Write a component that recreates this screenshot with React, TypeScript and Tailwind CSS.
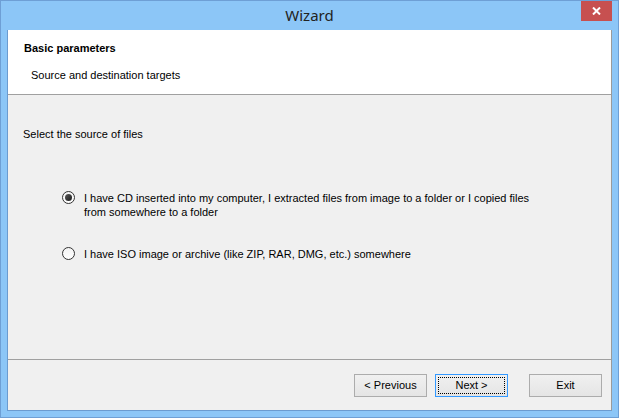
import React from "react";

function Radio({ checked }: { checked?: boolean }) {
  return (
    <span className="relative flex h-[13px] w-[13px] shrink-0 items-center justify-center rounded-full border border-[#333333] bg-gradient-to-b from-[#f4f4f4] to-[#ffffff]">
      {checked && (
        <span className="h-[7px] w-[7px] rounded-full bg-gradient-to-br from-[#5a5a5a] to-[#1c1c1c]" />
      )}
    </span>
  );
}

function Btn({ label, focused }: { label: string; focused?: boolean }) {
  return (
    <button
      className={
        "flex h-[23px] w-[73px] items-center justify-center border bg-gradient-to-b from-[#f0f0f0] to-[#e5e5e5] p-[2px] text-[11px] text-black " +
        (focused ? "border-[#3399ff]" : "border-[#acacac]")
      }
    >
      <span
        className={
          "flex h-full w-full items-center justify-center " +
          (focused ? "border border-dotted border-black" : "")
        }
      >
        {label}
      </span>
    </button>
  );
}

export default function App() {
  return (
    <div
      className="flex h-[418px] w-[619px] flex-col border border-[#6e9fd5] bg-[#8cc6f7]"
      style={{ fontFamily: "Tahoma, 'Liberation Sans', Arial, sans-serif" }}
    >
      {/* title bar */}
      <div className="relative flex h-[29px] shrink-0 items-center justify-center">
        <span
          className="text-[15px] text-[#222]"
          style={{ fontFamily: "'Segoe UI', 'Noto Sans', sans-serif" }}
        >
          Wizard
        </span>
        <div className="absolute right-[6px] top-0 flex h-[20px] w-[31px] items-center justify-center bg-[#c75050]">
          <svg width="9" height="8" viewBox="0 0 9 8">
            <path d="M1 0.5 L8 7.5 M8 0.5 L1 7.5" stroke="#fff" strokeWidth="2" />
          </svg>
        </div>
      </div>

      {/* client */}
      <div className="mx-[6px] mb-[6px] flex flex-1 flex-col border-l border-r border-b border-l-[#6b9bd0] border-r-[#9a9a9a] border-b-[#6b9bd0] bg-[#f0f0f0] text-[11px] text-black">
        <div className="flex h-[65px] shrink-0 flex-col border-b border-[#a0a0a0] bg-white pl-[16px] pt-[10px]">
          <div className="font-bold">Basic parameters</div>
          <div className="mt-[10px] pl-[7px]">Source and destination targets</div>
        </div>

        <div className="flex flex-1 flex-col px-[15px]">
          <div className="mt-[31px]">Select the source of files</div>

          <div className="mt-[48px] flex flex-col gap-[28px] pl-[39px]">
            <label className="flex items-start gap-[9px]">
              <Radio checked />
              <span className="leading-[14px]">
                I have CD inserted into my computer, I extracted files from image to a folder or I copied files
                <br />
                from somewhere to a folder
              </span>
            </label>
            <label className="flex items-start gap-[9px]">
              <Radio />
              <span className="leading-[14px]">
                I have ISO image or archive (like ZIP, RAR, DMG, etc.) somewhere
              </span>
            </label>
          </div>
        </div>

        <div className="flex h-[51px] shrink-0 items-center justify-end gap-[8px] border-t border-[#a0a0a0] pr-[9px] pt-[1px]">
          <Btn label="< Previous" />
          <Btn label="Next >" focused />
          <div className="w-[5px]" />
          <Btn label="Exit" />
        </div>
      </div>
    </div>
  );
}
